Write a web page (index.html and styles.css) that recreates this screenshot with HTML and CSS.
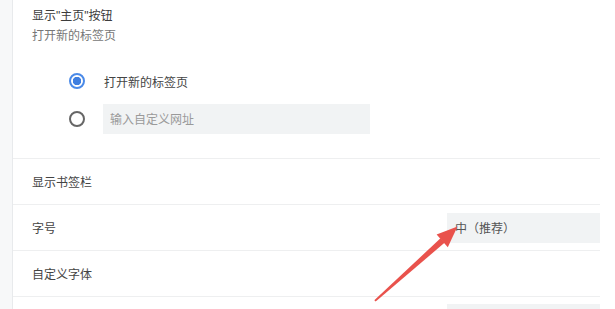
FILE: index.html
```html
<!DOCTYPE html>
<html lang="zh-CN">
<head>
    <meta charset="UTF-8">
    <title>外观设置</title>
    <link rel="stylesheet" href="styles.css">
</head>
<body>
    <div class="page">
        <div class="gutter"></div>
        <div class="card">
            <div class="home-section">
                <div class="title">显示"主页"按钮</div>
                <div class="subtitle">打开新的标签页</div>

                <div class="radio-group">
                    <label class="radio-row">
                        <span class="radio checked"></span>
                        <span class="radio-label">打开新的标签页</span>
                    </label>
                    <label class="radio-row">
                        <span class="radio"></span>
                        <span class="url-input">输入自定义网址</span>
                    </label>
                </div>
            </div>

            <div class="row">
                <span class="row-label">显示书签栏</span>
            </div>
            <div class="row">
                <span class="row-label">字号</span>
                <div class="select">中（推荐）</div>
            </div>
            <div class="row">
                <span class="row-label">自定义字体</span>
            </div>
            <div class="row last">
                <span class="row-label"></span>
                <div class="select"></div>
            </div>
        </div>

        <!-- 标注箭头 -->
        <svg class="arrow" width="615" height="309" viewBox="0 0 615 309">
            <polygon points="374.3,300.2 375.7,301.6 444.5,242.8 440.5,238.3" fill="#e9524c"/>
            <polygon points="457.5,226.5 447.8,247.2 436.6,234.6" fill="#e9524c"/>
        </svg>
    </div>
</body>
</html>
```

FILE: styles.css
```css
body {
    margin: 0;
    background: #fff;
    font-family: "Noto Sans CJK SC", "Noto Sans", sans-serif;
    font-size: 12px;
    color: #333;
}
.page {
    position: relative;
    display: flex;
    width: 615px;
    height: 309px;
    overflow: hidden;
}
.gutter {
    width: 12px;
    background: #f7f8f9;
    border-right: 1px solid #e8eaec;
}
.card {
    width: 587px;
    background: #fff;
}
.home-section {
    padding: 7px 0 0 19px;
    height: 151px;
    border-bottom: 1px solid #eeeff0;
}
.title {
    line-height: 18px;
    color: #3c3c3c;
    font-family: "Liberation Sans", "Noto Sans CJK SC", sans-serif;
    word-spacing: 0;
}
.subtitle {
    line-height: 18px;
    margin-top: 1px;
    color: #777;
}
.radio-group {
    padding-left: 37px;
    margin-top: 22px;
    display: flex;
    flex-direction: column;
    gap: 8px;
}
.radio-row {
    display: flex;
    align-items: center;
    height: 30px;
}
.radio {
    width: 12px;
    height: 12px;
    border: 2px solid #666;
    border-radius: 50%;
    margin-right: 18px;
    box-sizing: content-box;
}
.radio.checked {
    border-color: #4a8ae8;
    background: radial-gradient(circle, #3f7fe0 0 4px, #fff 4.5px);
}
.radio-label {
    color: #444;
    padding-left: 1px;
}
.url-input {
    width: 260px;
    height: 30px;
    line-height: 30px;
    padding-left: 7px;
    background: #f1f3f4;
    color: #9a9a9a;
}
.row {
    display: flex;
    align-items: center;
    justify-content: space-between;
    height: 45px;
    padding-left: 19px;
    border-bottom: 1px solid #eeeff0;
}
.row.last {
    border-bottom: none;
    align-items: flex-start;
    padding-top: 7px;
}
.row-label {
    color: #444;
}
.select {
    width: 145px;
    height: 30px;
    line-height: 30px;
    padding-left: 8px;
    background: #f1f3f4;
    color: #555;
}
.arrow {
    position: absolute;
    left: 0;
    top: 0;
    pointer-events: none;
}
```
